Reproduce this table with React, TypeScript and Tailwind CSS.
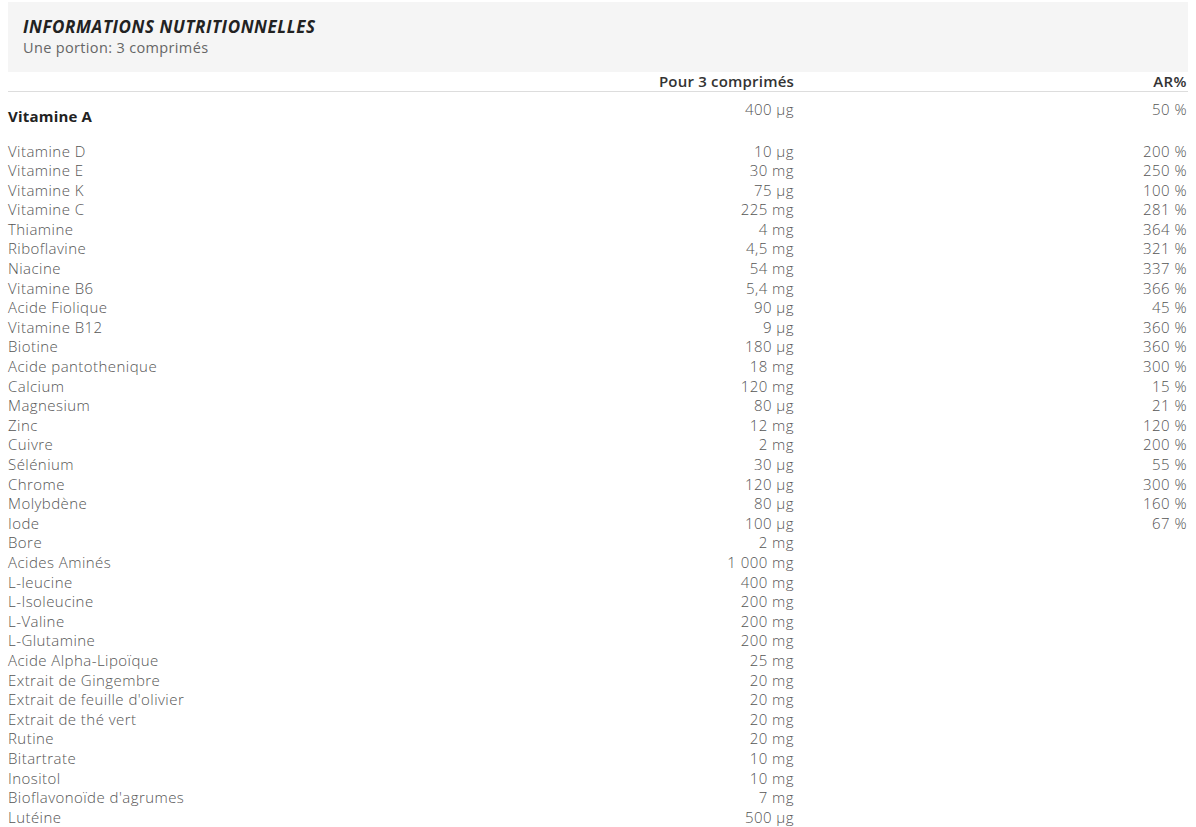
type Row = { name: string; amount: string; ar?: string };

const rows: Row[] = [
  { name: 'Vitamine D', amount: '10 µg', ar: '200 %' },
  { name: 'Vitamine E', amount: '30 mg', ar: '250 %' },
  { name: 'Vitamine K', amount: '75 µg', ar: '100 %' },
  { name: 'Vitamine C', amount: '225 mg', ar: '281 %' },
  { name: 'Thiamine', amount: '4 mg', ar: '364 %' },
  { name: 'Riboflavine', amount: '4,5 mg', ar: '321 %' },
  { name: 'Niacine', amount: '54 mg', ar: '337 %' },
  { name: 'Vitamine B6', amount: '5,4 mg', ar: '366 %' },
  { name: 'Acide Fiolique', amount: '90 µg', ar: '45 %' },
  { name: 'Vitamine B12', amount: '9 µg', ar: '360 %' },
  { name: 'Biotine', amount: '180 µg', ar: '360 %' },
  { name: 'Acide pantothenique', amount: '18 mg', ar: '300 %' },
  { name: 'Calcium', amount: '120 mg', ar: '15 %' },
  { name: 'Magnesium', amount: '80 µg', ar: '21 %' },
  { name: 'Zinc', amount: '12 mg', ar: '120 %' },
  { name: 'Cuivre', amount: '2 mg', ar: '200 %' },
  { name: 'Sélénium', amount: '30 µg', ar: '55 %' },
  { name: 'Chrome', amount: '120 µg', ar: '300 %' },
  { name: 'Molybdène', amount: '80 µg', ar: '160 %' },
  { name: 'Iode', amount: '100 µg', ar: '67 %' },
  { name: 'Bore', amount: '2 mg' },
  { name: 'Acides Aminés', amount: '1 000 mg' },
  { name: 'L-leucine', amount: '400 mg' },
  { name: 'L-Isoleucine', amount: '200 mg' },
  { name: 'L-Valine', amount: '200 mg' },
  { name: 'L-Glutamine', amount: '200 mg' },
  { name: 'Acide Alpha-Lipoïque', amount: '25 mg' },
  { name: 'Extrait de Gingembre', amount: '20 mg' },
  { name: "Extrait de feuille d'olivier", amount: '20 mg' },
  { name: 'Extrait de thé vert', amount: '20 mg' },
  { name: 'Rutine', amount: '20 mg' },
  { name: 'Bitartrate', amount: '10 mg' },
  { name: 'Inositol', amount: '10 mg' },
  { name: "Bioflavonoïde d'agrumes", amount: '7 mg' },
  { name: 'Lutéine', amount: '500 µg' },
];

export default function App() {
  return (
    <div className="bg-white px-2 pt-[2px] text-[#555] font-['Open_Sans',sans-serif] text-[15px] tracking-[0.45px] leading-[19.6px]">
      <div className="bg-[#f5f5f5] px-[15px] pt-[15px] h-[70px]">
        <h2 className="text-[17px] leading-[20px] font-bold italic text-[#222] tracking-[0.6px]">
          INFORMATIONS NUTRITIONNELLES
        </h2>
        <p className="text-[14.5px] leading-[20px] text-[#666] tracking-[0.35px] mt-[1px]">Une portion: 3 comprimés</p>
      </div>

      <div className="grid grid-cols-[592px_194px_1fr] w-[1180px]">
        <div className="h-[20px] border-b border-[#ddd]" />
        <div className="h-[20px] border-b border-[#ddd] text-right font-semibold text-[#333] tracking-[0.2px] leading-[19px]">
          Pour 3 comprimés
        </div>
        <div className="h-[20px] border-b border-[#ddd] text-right font-semibold text-[#333] leading-[19px] pr-[1px]">
          AR%
        </div>

        <div className="h-[48px] pt-[2px] flex items-center font-bold text-[#222] tracking-[0.2px]">Vitamine A</div>
        <div className="h-[48px] pt-[8px] text-right font-light">400 µg</div>
        <div className="h-[48px] pt-[8px] text-right font-light pr-[1px]">50 %</div>

        {rows.map((r) => (
          <div key={r.name} className="contents">
            <div className="font-light pt-[1.5px] -mb-[1.5px]">{r.name}</div>
            <div className="text-right font-light pt-[1.5px] -mb-[1.5px]">{r.amount}</div>
            <div className="text-right font-light pr-[1px] pt-[1.5px] -mb-[1.5px]">{r.ar ?? ''}</div>
          </div>
        ))}
      </div>
    </div>
  );
}
